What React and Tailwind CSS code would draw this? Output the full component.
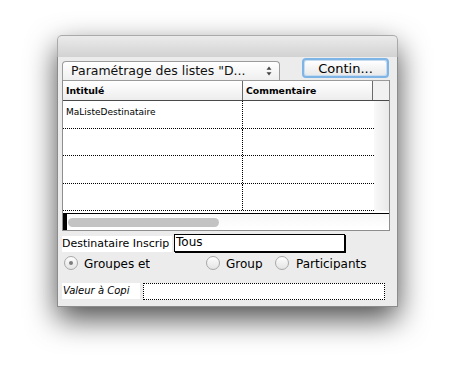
import React from 'react';

const font = { fontFamily: '"DejaVu Sans", Verdana, sans-serif' };

const Radio = ({ checked }) => (
    <div className="w-[14px] h-[14px] rounded-full border border-[#a8a8a8] bg-gradient-to-b from-[#fdfdfd] to-[#e4e4e4] flex items-center justify-center shrink-0">
        {checked && <div className="w-[4px] h-[4px] rounded-full bg-[#7c7c7c]" />}
    </div>
);

const rows = ['MaListeDestinataire', '', '', ''];

const App = () => {
    return (
        <div className="w-[454px] h-[386px] bg-white pt-[35px] pl-[57px]" style={font}>
            <div className="w-[341px] h-[272px] flex flex-col rounded-t-[5px] shadow-[0_12px_30px_rgba(0,0,0,0.7)]">
                {/* title bar */}
                <div className="h-[22px] rounded-t-[5px] border-x border-t border-[#a9a9a9] bg-gradient-to-b from-[#ebebeb] to-[#d2d2d2]" />

                <div className="flex-1 bg-[#ececec] border-x border-b border-[#8c8c8c] pl-[4px]">
                    {/* popup + button */}
                    <div className="flex items-start mt-[1px]">
                        <div className="mt-[3px] w-[218px] h-[19px] rounded-tl-[4px] rounded-tr-[4px] border border-b-0 border-[#9c9c9c] bg-gradient-to-b from-white to-[#efefef] flex items-center pl-[8px] pr-[5px]">
                            <span className="flex-1 text-[12.5px] leading-[16px] text-[#111] whitespace-nowrap overflow-hidden">
                                Paramétrage des listes "D...
                            </span>
                            <svg width="6" height="10" viewBox="0 0 6 10" className="mr-[2px]">
                                <path d="M3 0.5 L5.5 3.8 L0.5 3.8 Z" fill="#444" />
                                <path d="M3 9.5 L5.5 6.2 L0.5 6.2 Z" fill="#444" />
                            </svg>
                        </div>
                        <div className="ml-[22px] w-[87px] h-[20px] rounded-[4px] border-2 border-[#7fb4e6] bg-[#c8dcf0] p-[1px]">
                            <div className="w-full h-full rounded-[2px] bg-gradient-to-b from-white to-[#eaeaea] flex items-center justify-center text-[13px] leading-none text-black">
                                Contin...
                            </div>
                        </div>
                    </div>

                    {/* table */}
                    <div className="w-[328px] h-[151px] border-x border-b border-[#8e8e8e] bg-white flex flex-col">
                        <div className="h-[21px] flex border-t border-b border-t-[#9a9a9a] border-b-[#4a4a4a] bg-gradient-to-b from-white to-[#ededed]">
                            <div className="w-[180px] border-r border-[#6a6a6a] pl-[3px] flex items-center text-[9.3px] font-bold text-black">
                                Intitulé
                            </div>
                            <div className="w-[130px] border-r border-[#6a6a6a] pl-[3px] flex items-center text-[9.3px] font-bold text-black">
                                Commentaire
                            </div>
                            <div className="flex-1 bg-[#f1f1f1]" />
                        </div>
                        <div className="flex">
                            <div className="w-[311px] flex flex-col">
                                {rows.map((r, i) => (
                                    <div key={i} className="h-[27.5px] flex border-b border-dotted border-black">
                                        <div className="w-[180px] border-r border-dotted border-black pl-[3px] pt-[6px] text-[9px] leading-[10px] text-black">
                                            {r}
                                        </div>
                                        <div className="flex-1" />
                                    </div>
                                ))}
                            </div>
                            <div className="flex-1 bg-gradient-to-r from-[#f9f9f9] to-[#e9e9e9]" />
                        </div>
                        <div className="h-[2px]" />
                        <div className="flex-1 border-t border-black flex bg-gradient-to-b from-[#f7f7f7] to-white">
                            <div className="w-[4px] bg-black" />
                            <div className="w-[151px] h-[9px] mt-[4px] ml-[1px] rounded-full bg-[#c3c3c3]" />
                            <div className="flex-1" />
                        </div>
                    </div>

                    {/* destinataire */}
                    <div className="flex items-start mt-[3px]">
                        <div className="mt-[2px] w-[110px] h-[16px] bg-white text-[11px] leading-[16px] text-black whitespace-nowrap overflow-hidden">
                            Destinataire Inscrip
                        </div>
                        <div className="ml-[2px] w-[171px] h-[18px] border border-black shadow-[1px_1px_0_#000] bg-white pl-[1px] text-[12px] leading-[15px] text-black">
                            Tous
                        </div>
                    </div>

                    {/* radios */}
                    <div className="flex items-center mt-[4px] h-[14px]">
                        <div className="w-[144px] flex items-center pl-[2px]">
                            <Radio checked />
                            <div className="ml-[6px] h-[13px] overflow-hidden text-[12px] leading-[14px] text-black whitespace-nowrap">
                                Groupes et
                            </div>
                        </div>
                        <div className="w-[69px] flex items-center">
                            <Radio />
                            <div className="ml-[6px] h-[13px] overflow-hidden text-[12px] leading-[14px] text-black whitespace-nowrap">
                                Group
                            </div>
                        </div>
                        <div className="flex items-center">
                            <Radio />
                            <div className="ml-[7px] h-[13px] overflow-hidden text-[12px] leading-[14px] text-black whitespace-nowrap">
                                Participants
                            </div>
                        </div>
                    </div>

                    {/* valeur */}
                    <div className="flex items-start mt-[13px]">
                        <div className="w-[78px] h-[16px] bg-white text-[10px] italic leading-[16px] text-black whitespace-nowrap overflow-hidden pl-[1px]">
                            Valeur à Copi
                        </div>
                        <div className="ml-[3px] w-[242px] h-[17px] border border-dotted border-black bg-white" />
                    </div>
                </div>
            </div>
        </div>
    );
};

export default App;
